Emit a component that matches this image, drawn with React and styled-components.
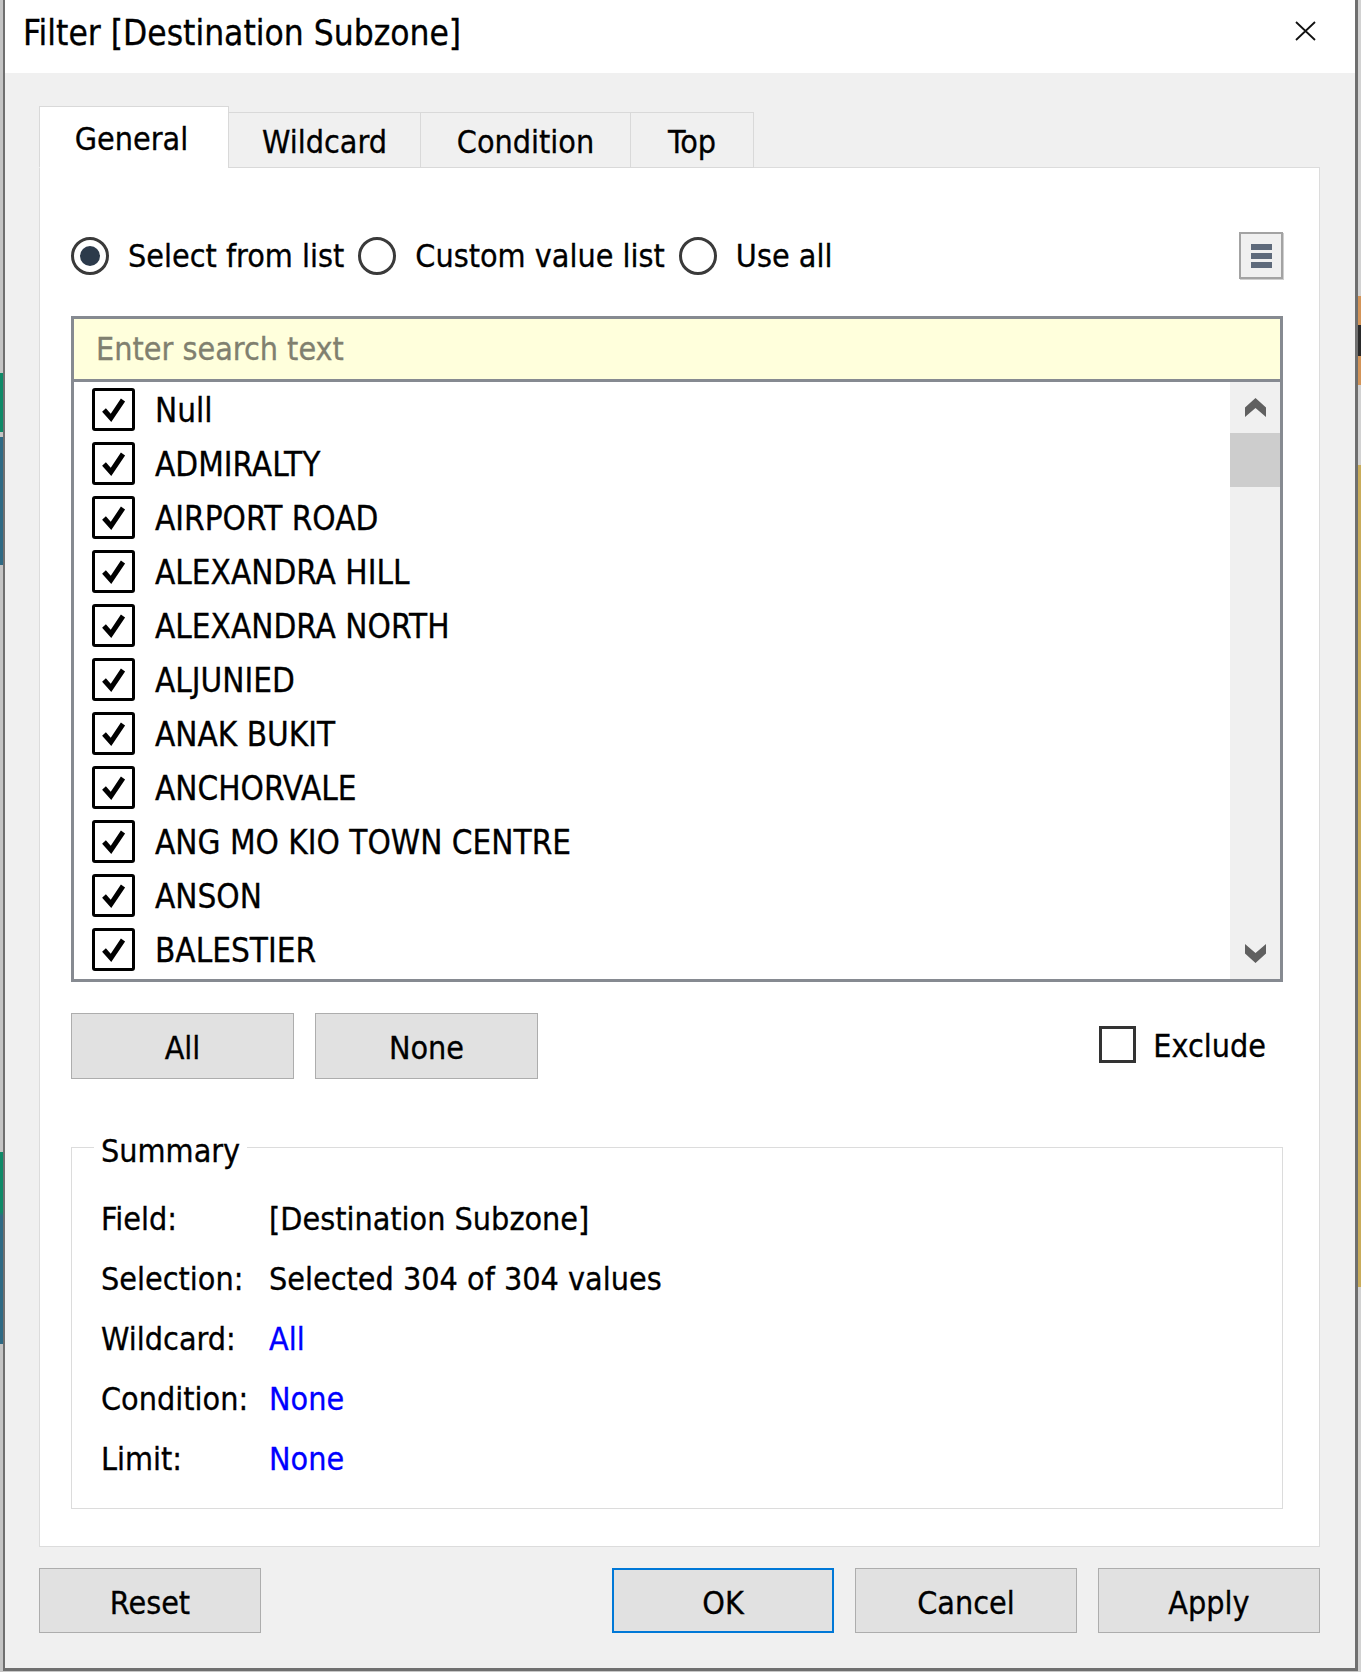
import React from 'react';
import styled, { createGlobalStyle } from 'styled-components';

const GlobalStyle = createGlobalStyle`
  html, body {
    margin: 0;
    padding: 0;
  }

  body {
    width: 1361px;
    height: 1672px;
    overflow: hidden;
    background: #c8c8c8;
    font-family: "DejaVu Sans Condensed", "DejaVu Sans", sans-serif;
    font-stretch: condensed;
    color: #000;
    -webkit-text-stroke: 0.3px currentColor;
  }

  * {
    box-sizing: border-box;
  }
`;

const values = [
  'Null',
  'ADMIRALTY',
  'AIRPORT ROAD',
  'ALEXANDRA HILL',
  'ALEXANDRA NORTH',
  'ALJUNIED',
  'ANAK BUKIT',
  'ANCHORVALE',
  'ANG MO KIO TOWN CENTRE',
  'ANSON',
  'BALESTIER',
];

const summary = [
  { label: 'Field:', value: '[Destination Subzone]' },
  { label: 'Selection:', value: 'Selected 304 of 304 values' },
  { label: 'Wildcard:', value: 'All', link: true },
  { label: 'Condition:', value: 'None', link: true },
  { label: 'Limit:', value: 'None', link: true },
];

const tabs = [
  { name: 'General', width: 190, active: true },
  { name: 'Wildcard', width: 193 },
  { name: 'Condition', width: 211 },
  { name: 'Top', width: 124 },
];

const CheckMark = () => (
  <svg width="37" height="37" viewBox="0 0 37 37">
    <polyline points="9,19 16,27 28,9" fill="none" stroke="#000" strokeWidth="5" strokeLinejoin="miter" />
  </svg>
);

const Chevron = ({ down }) => (
  <svg width="21" height="19" viewBox="0 0 21 19">
    <polygon
      points={down ? '10.5,19 21,9.5 21,0 10.5,9 0,0 0,9.5' : '10.5,0 21,9.5 21,19 10.5,10 0,19 0,9.5'}
      fill="#606060"
    />
  </svg>
);

const App = () => {
  return (
    <>
      <GlobalStyle />
      <Page>
        <Strip $side="left" />
        <Dialog>
          <TitleBar>
            <Title>Filter [Destination Subzone]</Title>
            <CloseButton>
              <svg width="21" height="20" viewBox="0 0 21 20">
                <path d="M1 1 L20 19 M20 1 L1 19" stroke="#111" strokeWidth="1.8" />
              </svg>
            </CloseButton>
          </TitleBar>

          <Body>
            <TabRow>
              {tabs.map(t => (
                <Tab key={t.name} $active={t.active} $w={t.width}>{t.name}</Tab>
              ))}
            </TabRow>

            <Panel>
              <OptionsRow>
                <RadioOption>
                  <Radio $checked />
                  Select from list
                </RadioOption>
                <RadioOption>
                  <Radio />
                  Custom value list
                </RadioOption>
                <RadioOption>
                  <Radio />
                  Use all
                </RadioOption>
                <MenuButton>
                  <span />
                  <span />
                  <span />
                </MenuButton>
              </OptionsRow>

              <ListBox>
                <SearchInput placeholder="Enter search text" />
                <ListArea>
                  <Items>
                    {values.map(v => (
                      <ItemRow key={v}>
                        <CheckBox><CheckMark /></CheckBox>
                        {v}
                      </ItemRow>
                    ))}
                  </Items>
                  <ScrollBar>
                    <ScrollArrow><Chevron /></ScrollArrow>
                    <ScrollThumb />
                    <ScrollSpacer />
                    <ScrollArrow><Chevron down /></ScrollArrow>
                  </ScrollBar>
                </ListArea>
              </ListBox>

              <ActionRow>
                <Button $w={223} $h={66}>All</Button>
                <Button $w={223} $h={66}>None</Button>
                <ExcludeOption>
                  <ExcludeBox />
                  Exclude
                </ExcludeOption>
              </ActionRow>

              <Summary>
                <legend>Summary</legend>
                <SummaryGrid>
                  {summary.map(s => (
                    <React.Fragment key={s.label}>
                      <SummaryLabel>{s.label}</SummaryLabel>
                      <SummaryValue $link={s.link}>{s.value}</SummaryValue>
                    </React.Fragment>
                  ))}
                </SummaryGrid>
              </Summary>
            </Panel>

            <Footer>
              <Button $w={222} $h={65}>Reset</Button>
              <ButtonGroup>
                <Button $w={222} $h={65} $primary>OK</Button>
                <Button $w={222} $h={65}>Cancel</Button>
                <Button $w={222} $h={65}>Apply</Button>
              </ButtonGroup>
            </Footer>
          </Body>
        </Dialog>
        <Strip $side="right" />
      </Page>
    </>
  );
}

export default App;



const leftStrip = `linear-gradient(to bottom,
  #c4c4c4 0 373px,
  #0f8a68 373px 432px,
  #c4c4c4 432px 437px,
  #2f6a84 437px 565px,
  #c4c4c4 565px 1152px,
  #0f8a68 1152px 1212px,
  #2f6a84 1216px 1344px,
  #c4c4c4 1344px)`;

const rightStrip = `linear-gradient(to bottom,
  #d2d2d2 0 296px,
  #d39458 296px 325px,
  #2a2a2a 325px 356px,
  #d39458 356px 385px,
  #d2d2d2 385px 465px,
  #c9ac5a 465px 1287px,
  #d2d2d2 1287px)`;

const Page = styled.div`
  display: flex;
  height: 1672px;
`;

const Strip = styled.div`
  flex: none;
  width: 3px;
  height: 1672px;
  background: ${p => (p.$side === 'left' ? leftStrip : rightStrip)};
`;

const Dialog = styled.div`
  flex: none;
  width: 1355px;
  height: 1671px;
  display: flex;
  flex-direction: column;
  background: #f0f0f0;
  border: solid #6f6f6f;
  border-width: 0 3px 3px 2px;
`;

const TitleBar = styled.div`
  height: 73px;
  display: flex;
  align-items: center;
  justify-content: space-between;
  padding: 0 30px 8px 18px;
  background: #fff;
`;

const Title = styled.div`
  font-size: 35px;
`;

const CloseButton = styled.div`
  width: 40px;
  height: 40px;
  display: flex;
  align-items: center;
  justify-content: center;
  margin-top: -3px;
`;

const Body = styled.div`
  display: flex;
  flex-direction: column;
  padding: 34px 35px 0 34px;
`;

const TabRow = styled.div`
  display: flex;
  align-items: flex-end;
  height: 61px;
  margin-bottom: -1px;
  position: relative;
  z-index: 1;
`;

const Tab = styled.div`
  width: ${p => p.$w}px;
  height: ${p => (p.$active ? 62 : 56)}px;
  display: flex;
  align-items: center;
  justify-content: center;
  padding: 4px ${p => (p.$active ? 5 : 0)}px 0 0;
  margin-left: -1px;
  font-size: 32px;
  background: ${p => (p.$active ? '#fff' : '#f0f0f0')};
  border: 1px solid #d9d9d9;
  border-bottom-color: ${p => (p.$active ? '#fff' : '#d9d9d9')};

  &:first-child {
    margin-left: 0;
  }
`;

const Panel = styled.div`
  display: flex;
  flex-direction: column;
  padding: 64px 36px 37px 31px;
  background: #fff;
  border: 1px solid #dcdcdc;
`;

const OptionsRow = styled.div`
  display: flex;
  align-items: center;
  height: 47px;
  font-size: 32px;
`;

const RadioOption = styled.label`
  display: flex;
  align-items: center;
  gap: 19px;
  margin-right: 14px;
`;

const Radio = styled.span`
  width: 38px;
  height: 38px;
  border: 3px solid #3a3a3a;
  border-radius: 50%;
  display: flex;
  align-items: center;
  justify-content: center;

  &::after {
    content: '';
    width: 20px;
    height: 20px;
    border-radius: 50%;
    background: ${p => (p.$checked ? '#2c3a4b' : 'transparent')};
  }
`;

const MenuButton = styled.div`
  margin-left: auto;
  width: 44px;
  height: 47px;
  display: flex;
  flex-direction: column;
  align-items: center;
  justify-content: center;
  gap: 3px;
  background: #f0f0f0;
  border: 2px solid #a3a3a3;
  box-shadow: 1px 1px 0 #cfcfcf;

  span {
    width: 21px;
    height: 6px;
    background: #5e6a7b;
  }
`;

const ListBox = styled.div`
  margin-top: 37px;
  border: 3px solid #868a91;
`;

const SearchInput = styled.input`
  display: block;
  width: 100%;
  height: 63px;
  padding: 0 0 0 22px;
  border: none;
  border-bottom: 3px solid #868a91;
  outline: none;
  background: #ffffdc;
  font: inherit;
  font-size: 32px;

  &::placeholder {
    color: #80806f;
  }
`;

const ListArea = styled.div`
  display: flex;
  height: 597px;
  background: #fff;
`;

const Items = styled.div`
  flex: 1;
  padding: 0 0 0 18px;
  overflow: hidden;
`;

const ItemRow = styled.div`
  height: 54px;
  display: flex;
  align-items: center;
  gap: 20px;
  padding-top: 2px;
  font-size: 33px;
`;

const CheckBox = styled.span`
  flex: none;
  width: 43px;
  height: 43px;
  margin-top: -2px;
  border: 3px solid #000;
  border-radius: 3px;
  background: #fff;
  display: flex;
`;

const ScrollBar = styled.div`
  width: 50px;
  display: flex;
  flex-direction: column;
  background: #f0f0f0;
`;

const ScrollArrow = styled.div`
  height: 51px;
  display: flex;
  align-items: center;
  justify-content: center;
`;

const ScrollThumb = styled.div`
  height: 54px;
  background: #cdcdcd;
`;

const ScrollSpacer = styled.div`
  flex: 1;
`;

const ActionRow = styled.div`
  margin-top: 31px;
  display: flex;
  align-items: center;
  gap: 21px;
`;

const Button = styled.div`
  width: ${p => p.$w}px;
  height: ${p => p.$h}px;
  display: flex;
  align-items: center;
  justify-content: center;
  padding-top: 4px;
  font-size: 32px;
  background: #e1e1e1;
  border: ${p => (p.$primary ? '2px solid #0078d7' : '1px solid #adadad')};
`;

const ExcludeOption = styled.label`
  margin-left: auto;
  padding-right: 17px;
  display: flex;
  align-items: center;
  gap: 17px;
  font-size: 32px;
`;

const ExcludeBox = styled.span`
  width: 37px;
  height: 37px;
  margin-top: -3px;
  border: 3px solid #333;
  background: #fff;
`;

const Summary = styled.fieldset`
  margin: 49px 0 0;
  padding: 0 0 19px;
  min-inline-size: 0;
  border: 1px solid #dcdcdc;

  legend {
    margin-left: 22px;
    padding: 8px 7px 0;
    font-size: 32px;
    line-height: 30px;
  }
`;

const SummaryGrid = styled.div`
  display: grid;
  grid-template-columns: 168px auto;
  grid-auto-rows: 60px;
  align-items: center;
  padding: 23px 0 0 29px;
  font-size: 32px;
`;

const SummaryLabel = styled.div``;

const SummaryValue = styled.div`
  color: ${p => (p.$link ? '#0000ff' : '#000')};
`;

const Footer = styled.div`
  margin-top: 21px;
  display: flex;
  justify-content: space-between;
`;

const ButtonGroup = styled.div`
  display: flex;
  gap: 21px;
`;
